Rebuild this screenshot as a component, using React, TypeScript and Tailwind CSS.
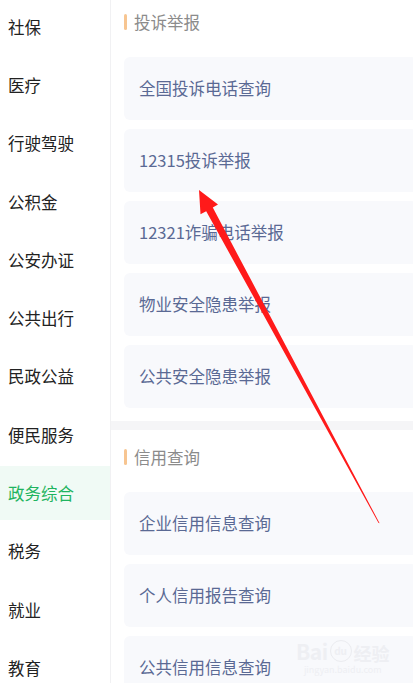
const menu = [
  "社保",
  "医疗",
  "行驶驾驶",
  "公积金",
  "公安办证",
  "公共出行",
  "民政公益",
  "便民服务",
  "政务综合",
  "税务",
  "就业",
  "教育",
];

const sections = [
  {
    title: "投诉举报",
    items: [
      "全国投诉电话查询",
      "12315投诉举报",
      "12321诈骗电话举报",
      "物业安全隐患举报",
      "公共安全隐患举报",
    ],
  },
  {
    title: "信用查询",
    items: ["企业信用信息查询", "个人信用报告查询", "公共信用信息查询"],
  },
];

function Sidebar() {
  return (
    <div className="-mt-[2px] flex w-[111px] shrink-0 flex-col border-r border-[#f1f1f3]">
      {menu.map((name) => {
        const active = name === "政务综合";
        return (
          <div key={name} className="flex h-[58.27px] shrink-0 flex-col justify-center">
            <div
              className={
                active
                  ? "flex h-[54px] items-center bg-[#f0faf5] pl-[8px] text-[#1fb45f]"
                  : "flex h-[54px] items-center pl-[8px] text-[#222222]"
              }
            >
              <span className="text-[16.5px] leading-none">{name}</span>
            </div>
          </div>
        );
      })}
    </div>
  );
}

function Section(props: { title: string; items: string[]; first?: boolean }) {
  return (
    <div className={props.first ? "pb-[13px] pt-[12px]" : "pb-[13px] pt-[17px]"}>
      <div className="flex h-[20px] items-center pl-[13px]">
        <div className="h-[16px] w-[3px] rounded-full bg-[#f7c591]" />
        <span className="ml-[7px] text-[16.5px] leading-none text-[#8b8b8b]">
          {props.title}
        </span>
      </div>
      <div className="mt-[25px] flex flex-col gap-[9px] pl-[13px]">
        {props.items.map((item) => (
          <div
            key={item}
            className="-mr-[4px] flex h-[63px] shrink-0 items-center rounded-[6px] bg-[#f8f9fc] pl-[15px]"
          >
            <span className="text-[16.5px] leading-none text-[#5a6994]">{item}</span>
          </div>
        ))}
      </div>
    </div>
  );
}

function Arrow() {
  return (
    <svg
      className="pointer-events-none absolute left-0 top-0"
      width="413"
      height="683"
      viewBox="0 0 413 683"
    >
      <polygon
        points="199,190 218,204.5 212.8,207.6 379.6,523.3 378.4,522.7 206.2,211.3 200.5,214.3"
        fill="#ff1a1a"
      />
    </svg>
  );
}

function Watermark() {
  return (
    <div className="pointer-events-none absolute left-[296px] top-[640px] flex flex-col items-center text-[#eeeff3]">
      <div className="flex items-end leading-none">
        <span className="text-[21px] font-bold tracking-tight">Bai</span>
        <span className="mx-[2px] flex h-[22px] w-[22px] items-center justify-center rounded-full border border-[#ebecf0] text-[10px] font-bold">
          du
        </span>
        <span className="text-[18px] font-bold">经验</span>
      </div>
      <span className="mt-[3px] text-[9px] leading-none">jingyan.baidu.com</span>
    </div>
  );
}

export default function App() {
  return (
    <div
      className="relative h-[683px] w-[413px] overflow-hidden bg-white"
      style={{ fontFamily: '"Noto Sans CJK SC", "Noto Sans", sans-serif' }}
    >
      <div className="flex h-full">
        <Sidebar />
        <div className="flex min-w-0 flex-1 flex-col">
          <Section title={sections[0].title} items={sections[0].items} first />
          <div className="h-[9px] shrink-0 bg-[#f5f5f7]" />
          <Section title={sections[1].title} items={sections[1].items} />
        </div>
      </div>
      <Watermark />
      <Arrow />
    </div>
  );
}
